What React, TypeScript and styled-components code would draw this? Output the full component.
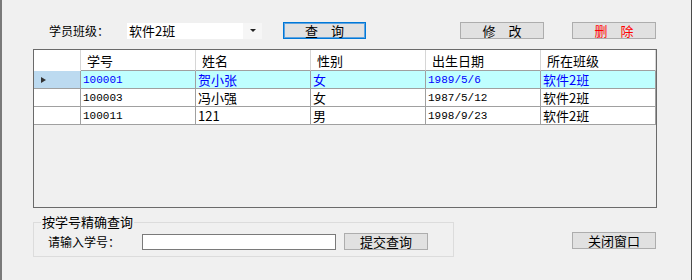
import React from "react";
import styled, { createGlobalStyle, css } from "styled-components";

const GlobalStyle = createGlobalStyle`
  html, body {
    margin: 0;
    padding: 0;
    background: #f0f0f0;
  }
  body {
    font-family: "Noto Sans CJK SC", "Liberation Sans", sans-serif;
    color: #000;
  }
`;

const Window = styled.div`
  width: 692px;
  height: 280px;
  box-sizing: border-box;
  background: #f0f0f0;
  border-left: 2px solid #7a7a7a;
  border-right: 1px solid #4a4a4a;
  display: flex;
  flex-direction: column;
  overflow: hidden;
`;

const TopBar = styled.div`
  display: flex;
  align-items: center;
  height: 17px;
  margin-top: 22px;
  padding-left: 47px;
`;

const FieldLabel = styled.span<{ $w: number }>`
  width: ${(p) => p.$w}px;
  flex: none;
  font-size: 12px;
  line-height: 17px;
  white-space: nowrap;
`;

const Combo = styled.div`
  width: 135px;
  height: 16px;
  background: #fff;
  display: flex;
  align-items: center;
  font-size: 13px;
  line-height: 16px;
  padding-left: 2px;
  box-sizing: border-box;
`;

const ComboArrow = styled.span`
  margin-left: auto;
  width: 19px;
  height: 16px;
  background: #f6f6f6;
  display: flex;
  align-items: center;
  justify-content: center;
  &::after {
    content: "";
    border-left: 3px solid transparent;
    border-right: 3px solid transparent;
    border-top: 3px solid #222;
  }
`;

const Button = styled.button<{ $w?: number; $ml?: number; $mt?: number; $danger?: boolean; $focused?: boolean }>`
  flex: none;
  box-sizing: border-box;
  width: ${(p) => p.$w ?? 84}px;
  height: 17px;
  margin-left: ${(p) => p.$ml ?? 0}px;
  margin-top: ${(p) => p.$mt ?? 0}px;
  padding: 0;
  background: #e1e1e1;
  border: 1px solid #adadad;
  font-family: "Noto Sans CJK SC", sans-serif;
  font-size: 13px;
  line-height: 15px;
  color: ${(p) => (p.$danger ? "#ff0000" : "#000")};
  white-space: pre;
  ${(p) =>
    p.$focused &&
    css`
      border-color: #0078d7;
      box-shadow: inset 0 0 0 1px #5ea3e0;
    `}
`;

const Grid = styled.div`
  margin: 10px 0 0 31px;
  width: 624px;
  height: 159px;
  box-sizing: border-box;
  border: 1px solid #6a6a6a;
  background: #f0f0f0;
  display: grid;
  grid-template-columns: 47px repeat(5, 115px);
  grid-template-rows: 21px repeat(3, 18px);
  align-content: start;
`;

const cellBase = css`
  box-sizing: border-box;
  border-right: 1px solid #a0a0a0;
  border-bottom: 1px solid #a0a0a0;
  display: flex;
  align-items: center;
  white-space: nowrap;
  overflow: hidden;
`;

const HeaderCell = styled.div<{ $corner?: boolean }>`
  ${cellBase}
  background: #fff;
  font-size: 13px;
  padding-left: 6px;
  border-right-color: #d6d6d6;
  ${(p) =>
    p.$corner &&
    css`
      border-bottom-color: #fff;
    `}
`;

const RowHeader = styled.div<{ $sel?: boolean }>`
  ${cellBase}
  background: ${(p) => (p.$sel ? "#bcdaf0" : "#fff")};
  padding-left: 7px;
  ${(p) =>
    p.$sel &&
    css`
      &::after {
        content: "";
        border-top: 3.5px solid transparent;
        border-bottom: 3.5px solid transparent;
        border-left: 5px solid #333;
      }
    `}
`;

const Cell = styled.div<{ $sel?: boolean; $mono?: boolean }>`
  ${cellBase}
  padding-left: 2px;
  background: ${(p) => (p.$sel ? "#bfffff" : "#fff")};
  color: ${(p) => (p.$sel ? "#0000ff" : "#000")};
  font-family: ${(p) =>
    p.$mono ? `"Liberation Mono", "Noto Sans CJK SC", monospace` : `"Noto Sans CJK SC", sans-serif`};
  font-size: ${(p) => (p.$mono ? 11 : 13)}px;
`;

const BottomRow = styled.div`
  display: flex;
  align-items: flex-start;
  margin: 7px 0 0 31px;
`;

const GroupBox = styled.fieldset`
  margin: 0;
  padding: 0 0 6px 0;
  width: 421px;
  min-width: 0;
  box-sizing: border-box;
  border: 1px solid #dcdcdc;
`;

const Legend = styled.legend`
  margin-left: 7px;
  padding: 0 1px;
  font-size: 13px;
  line-height: 14px;
`;

const GroupRow = styled.div`
  display: flex;
  align-items: center;
  height: 17px;
  margin-top: 4px;
  padding-left: 14px;
`;

const TextInput = styled.div`
  width: 194px;
  height: 16px;
  box-sizing: border-box;
  border: 1px solid #7a7a7a;
  background: #fff;
`;

type Row = { id: string; name: string; sex: string; birth: string; cls: string };

const rows: Row[] = [
  { id: "100001", name: "贺小张", sex: "女", birth: "1989/5/6", cls: "软件2班" },
  { id: "100003", name: "冯小强", sex: "女", birth: "1987/5/12", cls: "软件2班" },
  { id: "100011", name: "121", sex: "男", birth: "1998/9/23", cls: "软件2班" },
];

const headers = ["学号", "姓名", "性别", "出生日期", "所在班级"];

export default function App() {
  return (
    <>
      <GlobalStyle />
      <Window>
        <TopBar>
          <FieldLabel $w={78}>学员班级：</FieldLabel>
          <Combo>
            软件2班
            <ComboArrow />
          </Combo>
          <Button $w={83} $ml={21} $focused>
            查　询
          </Button>
          <Button $ml={94}>修　改</Button>
          <Button $ml={28} $danger>
            删　除
          </Button>
        </TopBar>
        <Grid>
          <HeaderCell $corner />
          {headers.map((h) => (
            <HeaderCell key={h}>{h}</HeaderCell>
          ))}
          {rows.map((r, i) => {
            const sel = i === 0;
            return (
              <React.Fragment key={r.id}>
                <RowHeader $sel={sel} />
                <Cell $sel={sel} $mono>
                  {r.id}
                </Cell>
                <Cell $sel={sel}>{r.name}</Cell>
                <Cell $sel={sel}>{r.sex}</Cell>
                <Cell $sel={sel} $mono>
                  {r.birth}
                </Cell>
                <Cell $sel={sel}>{r.cls}</Cell>
              </React.Fragment>
            );
          })}
        </Grid>
        <BottomRow>
          <GroupBox>
            <Legend>按学号精确查询</Legend>
            <GroupRow>
              <FieldLabel $w={94}>请输入学号：</FieldLabel>
              <TextInput />
              <Button $ml={8}>提交查询</Button>
            </GroupRow>
          </GroupBox>
          <Button $ml={118} $mt={17}>
            关闭窗口
          </Button>
        </BottomRow>
      </Window>
    </>
  );
}
